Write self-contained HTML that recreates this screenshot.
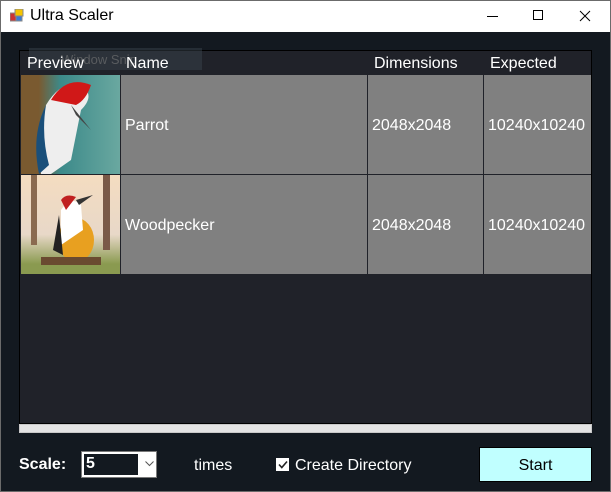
<!DOCTYPE html>
<html><head><style>
*{margin:0;padding:0;box-sizing:border-box}
body{width:611px;height:492px;overflow:hidden;background:#131920;font-family:"Liberation Sans",Arial,sans-serif;position:relative}
.frame{position:absolute;left:0;top:0;width:611px;height:492px;border:1px solid #6b6b6b;pointer-events:none}
.title{position:absolute;left:0;top:0;width:611px;height:32px;background:#fff;color:#000;font-size:16px}
.abs{position:absolute}
.grid{position:absolute;left:19px;top:50px;width:573px;height:374px;background:#202229;border:1px solid #000}
.hdr{position:absolute;top:1px;height:24px;color:#fff;font-size:16px;line-height:24px}
.cell{position:absolute;background:#808080;color:#fff;font-size:16px;display:flex;align-items:center;padding-left:4px;padding-top:3px}
.snip{position:absolute;left:9px;top:-3px;width:173px;height:22px;background:rgba(60,70,80,.45);color:rgba(120,120,120,.6);font-size:13px;padding:4px 0 0 32px}
</style></head><body>
<div class="title">
<svg class="abs" style="left:10px;top:9px" width="14" height="13"><rect x="0" y="4" width="6" height="8" fill="#c33" stroke="#888"/><rect x="5" y="0" width="8" height="7" fill="#f5c400" stroke="#888"/><rect x="6" y="7" width="6" height="5" fill="#3a7bd5" stroke="#888"/></svg>
<div class="abs" style="left:30px;top:7px">Ultra Scaler</div>
<div class="abs" style="left:487px;top:16px;width:11px;height:1px;background:#000"></div>
<div class="abs" style="left:533px;top:10px;width:10px;height:10px;border:1px solid #000"></div>
<svg class="abs" style="left:579px;top:10px" width="12" height="12"><path d="M1 1L11 11M11 1L1 11" stroke="#000" stroke-width="1"/></svg>
</div>
<div class="grid">
<div class="snip">Window Snip</div>
<div class="hdr" style="left:7px">Preview</div>
<div class="hdr" style="left:106px">Name</div>
<div class="hdr" style="left:354px">Dimensions</div>
<div class="hdr" style="left:470px">Expected</div>
<div class="abs" style="left:1px;top:24px;width:99px;height:99px;background:linear-gradient(90deg,#7a5a30 0 18%,#3c8a8a 40%,#6aa8a0 100%)">
<svg width="99" height="99"><path d="M25 30 Q40 5 60 10 Q75 20 60 35 Q55 60 50 85 L30 99 L20 99 Q15 60 25 30Z" fill="#eee"/><path d="M25 30 Q20 60 28 90 L18 99 Q10 60 25 30Z" fill="#1a4f7a"/><path d="M30 25 Q45 0 70 10 Q65 25 55 30Z" fill="#d01818"/><path d="M50 30 L70 55 L55 40Z" fill="#444"/></svg></div>
<div class="cell" style="left:101px;top:24px;width:246px;height:99px">Parrot</div>
<div class="cell" style="left:348px;top:24px;width:115px;height:99px">2048x2048</div>
<div class="cell" style="left:464px;top:24px;width:107px;height:99px">10240x10240</div>
<div class="abs" style="left:1px;top:124px;width:99px;height:99px;background:linear-gradient(180deg,#f4dcc0 0,#e8d8c8 60%,#8a9a50 90%)">
<svg width="99" height="99"><rect x="10" y="0" width="6" height="70" fill="#8a6a50"/><rect x="82" y="0" width="7" height="75" fill="#7a5a48"/><ellipse cx="55" cy="65" rx="18" ry="22" fill="#e8a020"/><path d="M40 35 Q50 20 60 30 L62 55 L40 70Z" fill="#fff"/><path d="M38 40 L42 80 L32 75Z" fill="#222"/><path d="M40 25 Q45 18 55 22 L45 35Z" fill="#c02020"/><path d="M55 25 L72 20 L58 30Z" fill="#333"/><rect x="20" y="82" width="60" height="8" fill="#6a4a30"/></svg></div>
<div class="cell" style="left:101px;top:124px;width:246px;height:99px">Woodpecker</div>
<div class="cell" style="left:348px;top:124px;width:115px;height:99px">2048x2048</div>
<div class="cell" style="left:464px;top:124px;width:107px;height:99px">10240x10240</div>
</div>
<div class="abs" style="left:19px;top:424px;width:573px;height:9px;background:#e3e3e3;border:1px solid #c8c8c8"></div>
<div class="abs" style="left:19px;top:456px;color:#fff;font-size:16px;font-weight:bold">Scale:</div>
<div class="abs" style="left:81px;top:451px;width:76px;height:27px;background:#fff;border:1px solid #7a7a7a"></div>
<div class="abs" style="left:83px;top:453px;width:56px;height:23px;background:#131920;border:1px solid #fff;color:#fff;font-size:16px;font-weight:bold;padding:1px 0 0 2px">5</div>
<svg class="abs" style="left:145px;top:461px" width="9" height="6"><path d="M0.5 0.5L4.5 4.5L8.5 0.5" stroke="#555" fill="none"/></svg>
<div class="abs" style="left:194px;top:457px;color:#fff;font-size:16px">times</div>
<div class="abs" style="left:276px;top:458px;width:13px;height:13px;background:#fff"></div>
<svg class="abs" style="left:278px;top:460px" width="10" height="9"><path d="M1 4.5L3.8 7.5L9 1.5" stroke="#222" stroke-width="1.6" fill="none"/></svg>
<div class="abs" style="left:295px;top:457px;color:#fff;font-size:16px">Create Directory</div>
<div class="abs" style="left:479px;top:447px;width:113px;height:35px;background:#c0ffff;border:1px solid #000;color:#000;font-size:16px;text-align:center;line-height:35px">Start</div>
<div class="frame"></div>
</body></html>
